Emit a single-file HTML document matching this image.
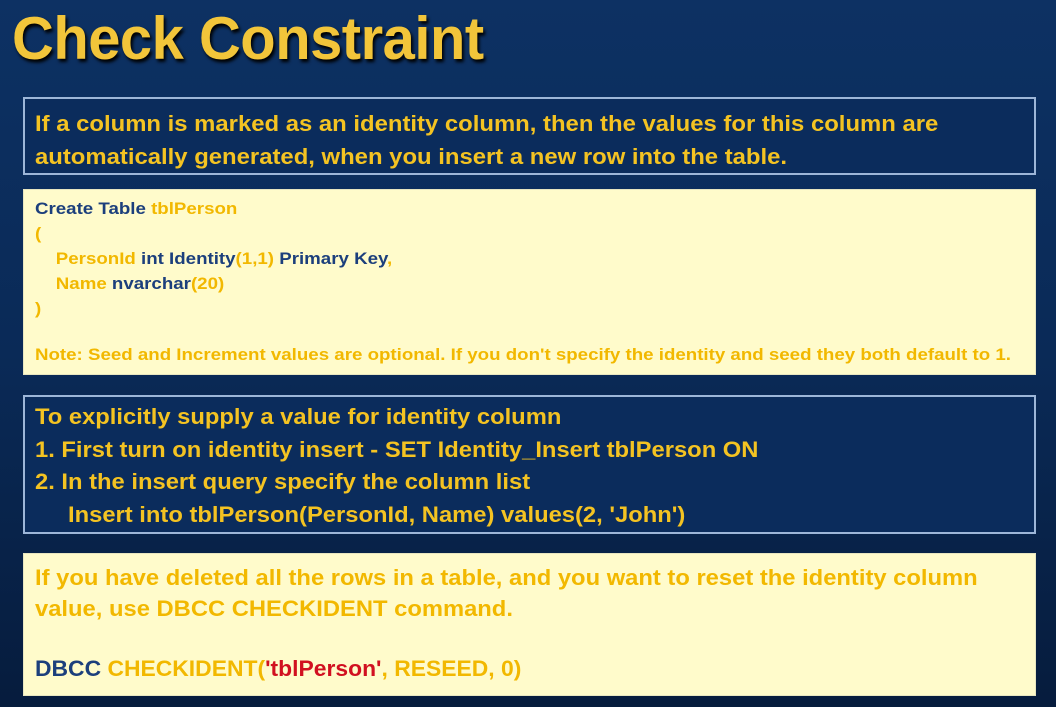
<!DOCTYPE html>
<html><head><meta charset="utf-8"><style>
html,body{margin:0;padding:0}
body{width:1056px;height:707px;overflow:hidden;position:relative;background:linear-gradient(#0d3163 0%,#0a2a57 50%,#061c3d 100%);font-family:"Liberation Sans",sans-serif;font-weight:bold}
.t{position:absolute;white-space:nowrap;transform-origin:0 0}
h1{position:absolute;left:12px;top:4px;margin:0;font-size:60px;color:#f2c53a;text-shadow:2px 3px 3px #000;white-space:nowrap;transform:scaleX(0.965);transform-origin:0 0;letter-spacing:-0.5px}
.bx{position:absolute;left:23px;width:1013px;box-sizing:border-box}
.dark{border:2px solid #9db6d8;background:#0b2c5c}
.yel{background:#fffbcb;border:1px solid #e8e6c0}
.g{color:#f4c322}.b{color:#1c3f7c}.r{color:#d11020}.o{color:#f2b800}
</style></head><body>
<h1>Check Constraint</h1>
<div class="bx dark" style="top:97px;height:78px"></div>
<div class="t g" style="left:35px;top:107px;font-size:22px;line-height:33px;transform:scaleX(1.085)">If a column is marked as an identity column, then the values for this column are<br>automatically generated, when you insert a new row into the table.</div>
<div class="bx yel" style="top:189px;height:186px"></div>
<div class="t" style="left:35px;top:196px;font-size:17px;line-height:25px;transform:scaleX(1.1)">
<span class="b">Create Table </span><span class="o">tblPerson</span><br>
<span class="o">(</span><br>
&nbsp;&nbsp;&nbsp;&nbsp;<span class="o">PersonId </span><span class="b">int Identity</span><span class="o">(1,1) </span><span class="b">Primary Key</span><span class="o">,</span><br>
&nbsp;&nbsp;&nbsp;&nbsp;<span class="o">Name </span><span class="b">nvarchar</span><span class="o">(20)</span><br>
<span class="o">)</span></div>
<div class="t o" style="left:35px;top:345px;font-size:17px;transform:scaleX(1.1)">Note: Seed and Increment values are optional. If you don't specify the identity and seed they both default to 1.</div>
<div class="bx dark" style="top:395px;height:139px"></div>
<div class="t g" style="left:35px;top:401px;font-size:22px;line-height:32.5px;transform:scaleX(1.08)">To explicitly supply a value for identity column<br>1. First turn on identity insert - SET Identity_Insert tblPerson ON<br>2. In the insert query specify the column list<br>&nbsp;&nbsp;&nbsp;&nbsp;&nbsp;Insert into tblPerson(PersonId, Name) values(2, 'John')</div>
<div class="bx yel" style="top:553px;height:143px"></div>
<div class="t o" style="left:35px;top:562px;font-size:22px;line-height:31px;transform:scaleX(1.08)">If you have deleted all the rows in a table, and you want to reset the identity column<br>value, use DBCC CHECKIDENT command.</div>
<div class="t" style="left:35px;top:656px;font-size:22px;transform:scaleX(1.04)"><span class="b">DBCC </span><span class="o">CHECKIDENT(</span><span class="r">'tblPerson'</span><span class="o">, RESEED, 0)</span></div>
</body></html>
